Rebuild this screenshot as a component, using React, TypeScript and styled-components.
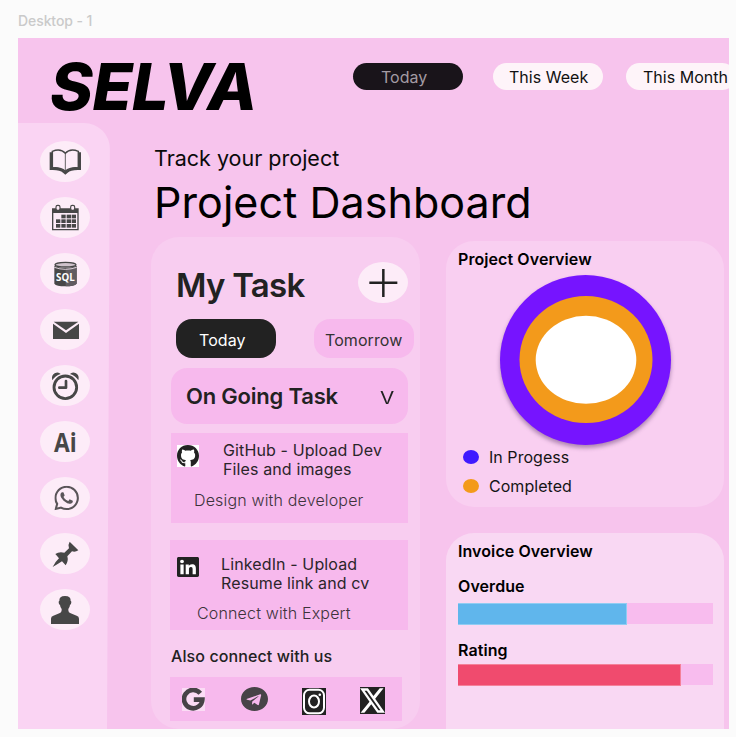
import React from 'react';
import styled, { createGlobalStyle } from 'styled-components';
import { FaGithub, FaLinkedin, FaTelegram } from 'react-icons/fa';
import { FaXTwitter } from 'react-icons/fa6';
import { BsWhatsapp } from 'react-icons/bs';

const GlobalStyle = createGlobalStyle`
  * { box-sizing: border-box; }
  body {
    margin: 0;
    background: #fbfbfb;
    font-family: Inter, 'Liberation Sans', sans-serif;
    color: #222;
  }
  h1, h2, h3, p { margin: 0; font-weight: 400; }
  button { font: inherit; border: 0; padding: 0; }
  svg { display: block; }
`;

const Canvas = styled.div`
  width: 736px;
  height: 737px;
  overflow: hidden;
  padding: 0 7px 0 18px;
`;

const FrameLabel = styled.div`
  height: 38px;
  padding-top: 11px;
  font-size: 14px;
  line-height: 20px;
  letter-spacing: -0.08px;
  font-weight: 500;
  color: #cacaca;
`;

const Frame = styled.div`
  width: 711px;
  height: 691px;
  overflow: hidden;
  background: #f7c4ed;
`;

const Header = styled.header`
  display: flex;
  height: 85px;
  padding-left: 32px;
`;

const Logo = styled.h1`
  flex: none;
  width: 303px;
  padding-top: 9px;
  font-size: 65px;
  line-height: 79px;
  font-weight: 800;
  font-style: italic;
  letter-spacing: -0.5px;
  color: #000;
`;

const Period = styled.nav`
  display: flex;
  gap: 30px;
  padding-top: 25.3px;
`;

const PeriodPill = styled.button<{ $active?: boolean; $indent: number; $after?: number }>`
  flex: none;
  width: 110px;
  height: 27px;
  border-radius: 14px;
  text-align: left;
  white-space: nowrap;
  padding: 1px 0 0 ${(p) => p.$indent}px;
  margin-right: ${(p) => p.$after ?? 0}px;
  font-size: 16px;
  line-height: 26px;
  letter-spacing: 0.03px;
  background: ${(p) => (p.$active ? '#19141a' : '#fef4f9')};
  color: ${(p) => (p.$active ? '#a39ba3' : '#111')};
`;

const Body = styled.div`
  display: flex;
  align-items: flex-start;
`;

const Sidebar = styled.aside`
  flex: none;
  display: flex;
  flex-direction: column;
  gap: 15px;
  width: 92px;
  height: 606px;
  padding: 18px 0 0 22.3px;
  border-top-right-radius: 26px;
  background: #fad4f3;
  clip-path: polygon(0 0, 100% 0, 89px 100%, 0 100%);
`;

const Oval = styled.button`
  flex: none;
  width: 50px;
  height: 41px;
  border-radius: 50%;
  background: #fdecf8;
  color: #474747;
`;

const Main = styled.main`
  flex: 1;
  padding: 22px 0 0 41px;
`;

const Eyebrow = styled.p`
  padding-left: 3px;
  font-size: 21.5px;
  line-height: 27px;
  color: #0a0a0a;
  white-space: nowrap;
`;

const Title = styled.h2`
  padding-left: 3px;
  margin-top: 3px;
  height: 62px;
  font-size: 43px;
  line-height: 54px;
  letter-spacing: 0.06px;
  color: #000;
  white-space: nowrap;
`;

const Columns = styled.div`
  display: flex;
  align-items: flex-start;
`;

const TaskCard = styled.section`
  flex: none;
  width: 269px;
  height: 492px;
  padding: 25px 12px 0 20px;
  border-radius: 28px;
  background: #f8cdf0;
`;

const TaskHead = styled.div`
  display: flex;
  justify-content: space-between;
  height: 57px;
  padding-left: 5px;
`;

const TaskTitle = styled.h2`
  font-size: 33px;
  line-height: 46px;
  font-weight: 600;
  letter-spacing: -0.75px;
  white-space: nowrap;
`;

const DayTabs = styled.div`
  display: flex;
  gap: 38px;
  height: 49px;
  padding-left: 5px;
`;

const DayTab = styled.button<{ $active?: boolean; $indent: number }>`
  flex: none;
  width: 100px;
  height: 39px;
  border-radius: 16px;
  text-align: left;
  padding: 2px 0 0 ${(p) => p.$indent}px;
  font-size: 16px;
  line-height: 38px;
  letter-spacing: 0.08px;
  background: ${(p) => (p.$active ? '#222' : '#f7b9ed')};
  color: ${(p) => (p.$active ? '#fff' : '#333')};
`;

const Ongoing = styled.button`
  display: flex;
  justify-content: space-between;
  width: 237px;
  height: 56px;
  padding: 0 15px 0 15px;
  border-radius: 16px;
  background: #f7b9ed;
  font-size: 22px;
  line-height: 56px;
  letter-spacing: -0.2px;
  font-weight: 600;
  color: #222;
`;

const Caret = styled.span`
  font-size: 17.5px;
  font-weight: 400;
  line-height: 59px;
  transform: scaleX(1.18);
`;

const Task = styled.article<{ $wide?: boolean }>`
  display: flex;
  height: 90px;
  width: ${(p) => (p.$wide ? 238 : 237)}px;
  margin-top: ${(p) => (p.$wide ? 17 : 9)}px;
  margin-left: ${(p) => (p.$wide ? -1 : 0)}px;
  padding-left: ${(p) => (p.$wide ? 7 : 6)}px;
  background: #f7b9ed;
`;

const BrandTile = styled.div<{ $w: number; $h: number; $top: number; $bg?: string }>`
  flex: none;
  width: ${(p) => p.$w}px;
  height: ${(p) => p.$h}px;
  margin-top: ${(p) => p.$top}px;
  background: ${(p) => p.$bg ?? 'transparent'};
  color: #222;
  svg { width: 100%; height: 100%; }
`;

const RoundedTile = styled(BrandTile)`
  border-radius: 3px;
`;

const TaskText = styled.div<{ $left: number; $top: number }>`
  padding: ${(p) => p.$top}px 0 0 ${(p) => p.$left}px;
  white-space: nowrap;
`;

const TaskName = styled.h3`
  font-size: 16px;
  line-height: 19.4px;
  letter-spacing: 0.12px;
  color: #2b252a;
`;

const TaskNote = styled.p<{ $shift: number; $top: number }>`
  margin: ${(p) => p.$top}px 0 0 ${(p) => p.$shift}px;
  font-size: 16px;
  line-height: 20px;
  font-weight: 300;
  letter-spacing: 0.16px;
  color: #3d333b;
`;

const ConnectTitle = styled.h3`
  margin-top: 16px;
  height: 31px;
  font-size: 16px;
  line-height: 20px;
  font-weight: 500;
  letter-spacing: 0.1px;
  white-space: nowrap;
`;

const Social = styled.div`
  display: flex;
  width: 232px;
  height: 44px;
  margin-left: -1px;
  padding-left: 12px;
  background: #f7b9ed;
`;

const SocialTile = styled(BrandTile)<{ $gap: number }>`
  margin-right: ${(p) => p.$gap}px;
`;

const Side = styled.div`
  flex: none;
  width: 278px;
  margin: 4px 0 0 26px;
`;

const Panel = styled.section<{ $bg: string; $h: number }>`
  height: ${(p) => p.$h}px;
  padding: 7px 11px 0 12px;
  margin-bottom: 26px;
  border-radius: 28px;
  background: ${(p) => p.$bg};
`;

const PanelTitle = styled.h3<{ $top?: number }>`
  margin-top: ${(p) => p.$top ?? 0}px;
  font-size: 16px;
  line-height: 22px;
  font-weight: 600;
  letter-spacing: 0.08px;
  color: #000;
  white-space: nowrap;
`;

const Chart = styled.div`
  width: 171px;
  height: 170px;
  margin: 5px 0 0 41.5px;
  filter: drop-shadow(0 3px 2px rgba(60, 20, 80, 0.4));
`;

const Legend = styled.div`
  margin-top: -3px;
`;

const LegendRow = styled.div`
  display: flex;
  align-items: center;
  gap: 10px;
  height: 29px;
  padding-left: 5px;
  font-size: 16px;
  letter-spacing: 0.04px;
  color: #151515;
`;

const Swatch = styled.span<{ $color: string }>`
  width: 16px;
  height: 14px;
  border-radius: 50%;
  background: ${(p) => p.$color};
`;

const Track = styled.div<{ $top: number }>`
  width: 255px;
  height: 21px;
  margin-top: ${(p) => p.$top}px;
  background: #f8bcee;
`;

const Fill = styled.div<{ $w: number; $color: string }>`
  width: ${(p) => p.$w}px;
  height: 22px;
  border: 1px solid rgba(255, 255, 255, 0.3);
  border-left: 0;
  background: ${(p) => p.$color};
`;

const Glyph = ({ children }: { children: React.ReactNode }) => (
  <svg width="50" height="41" viewBox="0 0 150 123" fill="currentColor">
    {children}
  </svg>
);

const Book = () => (
  <Glyph>
    <path d="M29 34h8v45q24 0 39 13q15-13 39-13V34h8v53q-30-2-40 8l-7 6l-7-6q-10-10-40-8z" />
    <path d="M37 81V31q25-10 39 6q14-16 39-6v50q-24-3-39 10q-15-13-39-10z" fill="none" stroke="currentColor" strokeWidth="4.500" />
    <path d="M76 37v54" stroke="currentColor" strokeWidth="2.500" />
  </Glyph>
);

const cells = [
  [64, 53], [80, 53], [95, 53],
  [48, 67], [64, 67], [80, 67], [95, 67],
  [48, 81], [64, 81], [80, 81], [95, 81],
];

const Calendar = () => (
  <Glyph>
    <path d="M36 34h80v66H36z" />
    <path d="M40 48h72v48H40z" fill="#fdecf8" />
    {[54, 98].map((x) => (
      <rect key={x} x={x - 6} y="25" width="12" height="15" rx="5" fill="#fdecf8" stroke="currentColor" strokeWidth="3.500" />
    ))}
    {cells.map(([x, y]) => (
      <rect key={`${x}-${y}`} x={x} y={y} width="13" height="11" />
    ))}
  </Glyph>
);

const Sql = () => (
  <Glyph>
    <path d="M43 38q33 14 67 0v54q-8 8-34 8q-27 0-33-8z" />
    <path d="M77 46q20 0 33-6v52q-8 8-33 8z" fill="#605c60" />
    <ellipse cx="76.500" cy="35" rx="31.500" ry="7" fill="#cfc2cb" stroke="currentColor" strokeWidth="4" />
    <path d="M43 43q33 12 67 0" fill="none" stroke="#fdecf8" strokeWidth="2.500" />
    <text x="76" y="84" textAnchor="middle" fontFamily="Open Sans" fontWeight="700" fontSize="29" textLength="56" lengthAdjust="spacingAndGlyphs" fill="#fff">SQL</text>
  </Glyph>
);

const Mail = () => (
  <Glyph>
    <path d="M41 38h74L78 64z" />
    <path d="M39 44l39 28l39-28v46H39z" />
  </Glyph>
);

const Alarm = () => (
  <Glyph>
    <circle cx="76" cy="67" r="34" fill="none" stroke="currentColor" strokeWidth="8.500" />
    <path d="M78 48v20H58" fill="none" stroke="currentColor" strokeWidth="8" strokeLinejoin="round" strokeLinecap="round" />
    <path d="M37 46q-4-15 7-21q11-6 18 2q-17 5-25 19z" />
    <path d="M115 46q4-15-7-21q-11-6-18 2q17 5 25 19z" />
  </Glyph>
);

const Ai = () => (
  <Glyph>
    <text x="76" y="94" textAnchor="middle" fontFamily="Open Sans" fontWeight="700" fontSize="80" textLength="68" lengthAdjust="spacingAndGlyphs">Ai</text>
  </Glyph>
);

const Chat = () => (
  <Glyph>
    <BsWhatsapp x="43" y="26" size={74} color="#5a5559" />
  </Glyph>
);

const Pin = () => (
  <Glyph>
    <path d="M38 102Q45 87 57 76L46 63q11-8 27-4L87 46q-4-11 2-20l26 26q-9 6-19 3L82 70q4 14-5 27L66 85Q51 95 38 102z" />
  </Glyph>
);

const Person = () => (
  <Glyph>
    <path d="M33 105V89q0-7 7-9l18-7q7-2 7-9v-4q-4-4-5-12q-4-1-4-8q0-4 2-4Q57 21 75 21t17 15q2 0 2 4q0 7-4 8q-1 8-5 12v4q0 7 7 9l18 7q7 2 7 9v16z" />
  </Glyph>
);

const sidebarIcons = [Book, Calendar, Sql, Mail, Alarm, Ai, Chat, Pin, Person];

const Donut = () => (
  <svg width="171" height="170" viewBox="0 0 171 170">
    <ellipse cx="85.500" cy="85" rx="85.500" ry="85" fill="#7614ff" />
    <ellipse cx="86" cy="84.500" rx="66.500" ry="63.500" fill="#f39a1b" />
    <ellipse cx="86" cy="84.800" rx="50.300" ry="44" fill="#fff" />
  </svg>
);

const GoogleMark = () => (
  <svg viewBox="0 0 23 23" fill="none" stroke="#474347" strokeWidth="4.600">
    <path d="M18.300 5.200A9.200 9.200 0 1 0 20.400 11.600H11.800" />
  </svg>
);

const InstagramMark = () => (
  <svg viewBox="0 0 23 27" fill="none" stroke="#fff" strokeWidth="2">
    <rect x="1.500" y="1.800" width="20" height="23.500" rx="5.500" />
    <ellipse cx="11.500" cy="13.500" rx="5" ry="6" />
    <circle cx="17.300" cy="6.700" r="1.300" fill="#fff" stroke="none" />
  </svg>
);

export default function App() {
  return (
    <Canvas>
      <GlobalStyle />
      <FrameLabel>Desktop - 1</FrameLabel>
      <Frame>
        <Header>
          <Logo>SELVA</Logo>
          <Period>
            <PeriodPill $active $indent={28}>Today</PeriodPill>
            <PeriodPill $indent={16} $after={-7}>This Week</PeriodPill>
            <PeriodPill $indent={17}>This Month</PeriodPill>
          </Period>
        </Header>
        <Body>
          <Sidebar>
            {sidebarIcons.map((Icon, i) => (
              <Oval key={i}>
                <Icon />
              </Oval>
            ))}
          </Sidebar>
          <Main>
            <Eyebrow>Track your project</Eyebrow>
            <Title>Project Dashboard</Title>
            <Columns>
              <TaskCard>
                <TaskHead>
                  <TaskTitle>My Task</TaskTitle>
                  <Oval>
                    <Glyph>
                      <path d="M76 21v84M34 62h84" stroke="#222" strokeWidth="7.500" />
                    </Glyph>
                  </Oval>
                </TaskHead>
                <DayTabs>
                  <DayTab $active $indent={23}>Today</DayTab>
                  <DayTab $indent={11}>Tomorrow</DayTab>
                </DayTabs>
                <Ongoing>
                  On Going Task
                  <Caret>V</Caret>
                </Ongoing>
                <Task>
                  <BrandTile $w={22} $h={22} $top={12} $bg="#fff">
                    <FaGithub viewBox="0 8 496 496" />
                  </BrandTile>
                  <TaskText $left={24} $top={8}>
                    <TaskName>GitHub - Upload Dev<br />Files and images</TaskName>
                    <TaskNote $shift={-29} $top={10}>Design with developer</TaskNote>
                  </TaskText>
                </Task>
                <Task $wide>
                  <RoundedTile $w={22} $h={20} $top={17} $bg="#fff">
                    <FaLinkedin viewBox="0 32 448 448" preserveAspectRatio="none" />
                  </RoundedTile>
                  <TaskText $left={22} $top={15}>
                    <TaskName>LinkedIn - Upload<br />Resume link and cv</TaskName>
                    <TaskNote $shift={-24} $top={9}>Connect with Expert</TaskNote>
                  </TaskText>
                </Task>
                <ConnectTitle>Also connect with us</ConnectTitle>
                <Social>
                  <SocialTile $w={23} $h={23} $top={11} $gap={36} $bg="#fbdcf5">
                    <GoogleMark />
                  </SocialTile>
                  <SocialTile $w={27} $h={24} $top={10} $gap={34}>
                    <FaTelegram viewBox="0 8 496 496" preserveAspectRatio="none" color="#474347" />
                  </SocialTile>
                  <SocialTile $w={24} $h={27} $top={11} $gap={34} $bg="#222">
                    <InstagramMark />
                  </SocialTile>
                  <SocialTile $w={25} $h={27} $top={10} $gap={0} $bg="#222">
                    <FaXTwitter viewBox="25 25 462 462" preserveAspectRatio="none" color="#fff" />
                  </SocialTile>
                </Social>
              </TaskCard>
              <Side>
                <Panel $bg="#f9cff1" $h={266}>
                  <PanelTitle>Project Overview</PanelTitle>
                  <Chart>
                    <Donut />
                  </Chart>
                  <Legend>
                    <LegendRow><Swatch $color="#3f1aff" />In Progess</LegendRow>
                    <LegendRow><Swatch $color="#f39a1b" />Completed</LegendRow>
                  </Legend>
                </Panel>
                <Panel $bg="#f9d8f3" $h={240}>
                  <PanelTitle>Invoice Overview</PanelTitle>
                  <PanelTitle $top={13}>Overdue</PanelTitle>
                  <Track $top={6}>
                    <Fill $w={169} $color="#60b6ec" />
                  </Track>
                  <PanelTitle $top={15}>Rating</PanelTitle>
                  <Track $top={3}>
                    <Fill $w={223} $color="#f04b6e" />
                  </Track>
                </Panel>
              </Side>
            </Columns>
          </Main>
        </Body>
      </Frame>
    </Canvas>
  );
}
